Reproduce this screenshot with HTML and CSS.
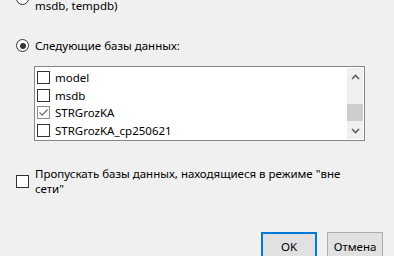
FILE: index.html
```html
<!DOCTYPE html>
<html lang="ru">
<head>
<meta charset="utf-8">
<link rel="stylesheet" href="styles.css">
</head>
<body>
<div class="dlg">
  <div class="opt opt-top">
    <span class="radio"></span>
    <span class="label">Все системные базы данных (master, model,<br>msdb, tempdb)</span>
  </div>
  <div class="opt opt-sel">
    <span class="radio checked"></span>
    <span class="label">Следующие базы данных:</span>
  </div>
  <div class="listbox">
    <div class="items">
      <div class="item"><span class="cb"></span><span>model</span></div>
      <div class="item"><span class="cb"></span><span>msdb</span></div>
      <div class="item"><span class="cb checked"><svg viewBox="0 0 11 11" width="11" height="11"><path d="M1.5 5.5 L4.2 8.2 L9.5 2.5" fill="none" stroke="#6b6b6b" stroke-width="1.2"/></svg></span><span>STRGrozKA</span></div>
      <div class="item"><span class="cb"></span><span>STRGrozKA_cp250621</span></div>
    </div>
    <div class="scrollbar">
      <div class="arrow"><svg viewBox="0 0 9 6" width="9" height="6"><path d="M1 5 L4.5 1.5 L8 5" fill="none" stroke="#606060" stroke-width="1.6"/></svg></div>
      <div class="track"><div class="thumb"></div></div>
      <div class="arrow"><svg viewBox="0 0 9 6" width="9" height="6"><path d="M1 1 L4.5 4.5 L8 1" fill="none" stroke="#606060" stroke-width="1.6"/></svg></div>
    </div>
  </div>
  <div class="opt opt-skip">
    <span class="cb"></span>
    <span class="label">Пропускать базы данных, находящиеся в режиме "вне<br>сети"</span>
  </div>
  <div class="buttons">
    <div class="btn btn-default">OK</div>
    <div class="btn">Отмена</div>
  </div>
</div>
</body>
</html>
```
FILE: styles.css
```css
html, body {
  margin: 0;
  padding: 0;
  background: #f0f0f0;
}
.dlg {
  width: 394px;
  padding-left: 16px;
  padding-top: 1px;
  box-sizing: border-box;
  font-family: "Noto Sans", "Open Sans", sans-serif;
  font-size: 11.5px;
  line-height: 15px;
  color: #000;
}
.opt {
  display: flex;
  align-items: center;
  gap: 6px;
}
.opt-top {
  margin-top: -18px;
}
.opt-sel {
  margin-top: 25px;
}
.radio {
  width: 13px;
  height: 13px;
  box-sizing: border-box;
  border: 1px solid #333;
  border-radius: 50%;
  background: #fff;
  flex: none;
  position: relative;
}
.radio.checked::after {
  content: "";
  position: absolute;
  left: 2.5px;
  top: 2.5px;
  width: 6px;
  height: 6px;
  border-radius: 50%;
  background: #333;
}
.cb {
  width: 13px;
  height: 13px;
  box-sizing: border-box;
  border: 1px solid #333;
  background: #fff;
  flex: none;
  display: flex;
  align-items: center;
  justify-content: center;
}
.cb.checked {
  border-color: #8a8a8a;
}
.listbox {
  margin-top: 13px;
  margin-left: 18px;
  width: 331px;
  height: 75px;
  box-sizing: border-box;
  border: 1px solid #828790;
  background: #fff;
  padding: 1px;
  display: flex;
}
.items {
  flex: 1;
  padding-top: 1px;
}
.item {
  height: 17.5px;
  display: flex;
  align-items: center;
  gap: 5px;
  padding-left: 1px;
}
.scrollbar {
  width: 16px;
  background: #f0f0f0;
  display: flex;
  flex-direction: column;
}
.arrow {
  height: 17px;
  display: flex;
  align-items: center;
  justify-content: center;
  flex: none;
}
.track {
  flex: 1;
  padding-top: 19px;
}
.thumb {
  height: 17px;
  background: #cdcdcd;
}
.opt-skip {
  margin-top: 25px;
}
.buttons {
  margin-top: 36px;
  display: flex;
  justify-content: flex-end;
  gap: 10px;
  padding-right: 11px;
}
.btn {
  width: 56px;
  height: 29px;
  box-sizing: border-box;
  background: #e1e1e1;
  border: 1px solid #adadad;
  display: flex;
  align-items: center;
  justify-content: center;
  padding-bottom: 1px;
  color: #000;
}
.btn-default {
  border: 2px solid #0078d7;
}
```
